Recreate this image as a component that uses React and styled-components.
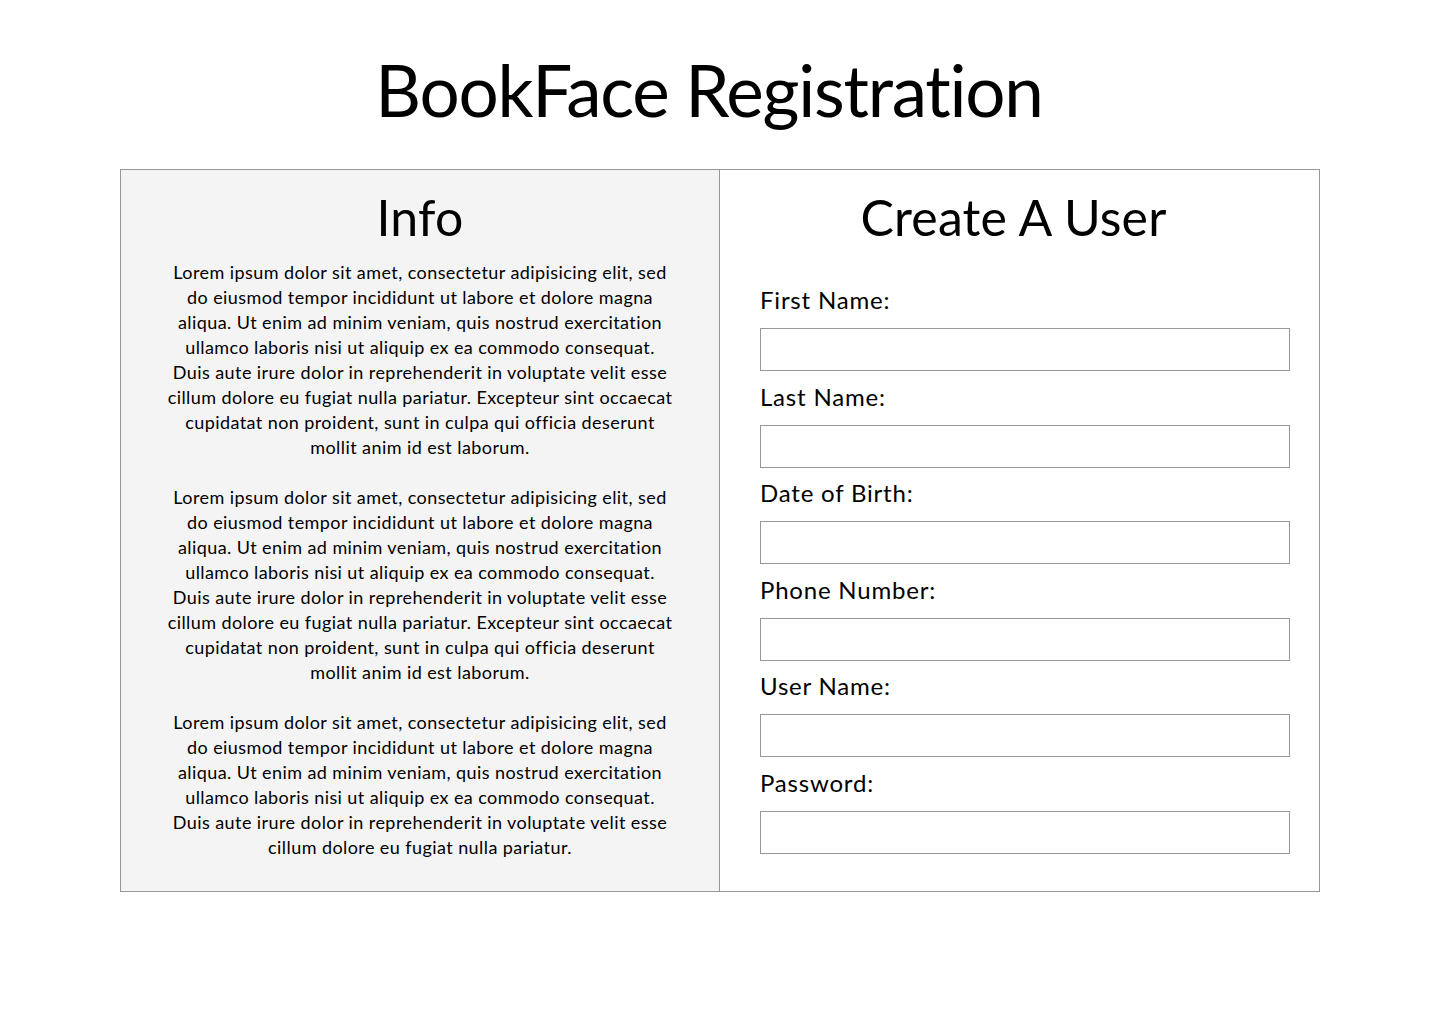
import React from "react";
import styled, { createGlobalStyle } from "styled-components";

const GlobalStyle = createGlobalStyle`
  html, body {
    margin: 0;
    padding: 0;
    background: #ffffff;
    font-family: "Lato", "Noto Sans", sans-serif;
    color: #000;
  }
`;

const Page = styled.div`
  width: 1440px;
  min-height: 1024px;
  display: flex;
  flex-direction: column;
  align-items: center;
`;

const Title = styled.h1`
  margin: 48px 0 0;
  padding-right: 22px;
  font-size: 71px;
  font-weight: 400;
  letter-spacing: -1.25px;
  line-height: 84px;
  text-align: center;
`;

const Card = styled.div`
  margin-top: 37px;
  width: 1200px;
  display: grid;
  grid-template-columns: 1fr 1fr;
  border: 1px solid #979797;
  box-sizing: border-box;
`;

const InfoPanel = styled.section`
  background: #f4f4f4;
  border-right: 1px solid #979797;
  padding: 15px 20px 30px;
  display: flex;
  flex-direction: column;
  align-items: center;
`;

const FormPanel = styled.section`
  padding: 15px 29px 37px 40px;
  display: flex;
  flex-direction: column;
`;

const PanelTitle = styled.h2`
  margin: 0;
  padding-right: ${(props) => props.$shift || 0}px;
  font-size: 50px;
  font-weight: 400;
  letter-spacing: 0.2px;
  line-height: 64px;
  text-align: center;
`;

const Paragraph = styled.p`
  margin: ${(props) => (props.$first ? "11px" : "25px")} 0 0;
  font-size: 18px;
  letter-spacing: 0.42px;
  line-height: 25px;
  text-align: center;
`;

const Line = styled.span`
  display: block;
  white-space: nowrap;
`;

const Form = styled.form`
  margin-top: 36px;
  display: flex;
  flex-direction: column;
`;

const Label = styled.label`
  font-size: 24px;
  letter-spacing: 0.8px;
  line-height: 30px;
  margin-top: ${(props) => (props.$first ? "0" : "10.5px")};
`;

const Input = styled.input`
  margin-top: 13px;
  width: 530px;
  height: 43px;
  box-sizing: border-box;
  border: 1px solid #979797;
  border-radius: 0;
  background: #fff;
  font: inherit;
  font-size: 18px;
  padding: 0 10px;
  outline: none;
`;

const fullText = [
  "Lorem ipsum dolor sit amet, consectetur adipisicing elit, sed",
  "do eiusmod tempor incididunt ut labore et dolore magna",
  "aliqua. Ut enim ad minim veniam, quis nostrud exercitation",
  "ullamco laboris nisi ut aliquip ex ea commodo consequat.",
  "Duis aute irure dolor in reprehenderit in voluptate velit esse",
  "cillum dolore eu fugiat nulla pariatur. Excepteur sint occaecat",
  "cupidatat non proident, sunt in culpa qui officia deserunt",
  "mollit anim id est laborum.",
];

const shortText = [...fullText.slice(0, 5), "cillum dolore eu fugiat nulla pariatur."];

const paragraphs = [fullText, fullText, shortText];

const fields = [
  { id: "first", label: "First Name:", type: "text" },
  { id: "last", label: "Last Name:", type: "text" },
  { id: "dob", label: "Date of Birth:", type: "text" },
  { id: "phone", label: "Phone Number:", type: "text" },
  { id: "user", label: "User Name:", type: "text" },
  { id: "pass", label: "Password:", type: "password" },
];

export default function App() {
  return (
    <>
      <GlobalStyle />
      <Page>
        <Title>BookFace Registration</Title>
        <Card>
          <InfoPanel>
            <PanelTitle>Info</PanelTitle>
            {paragraphs.map((lines, i) => (
              <Paragraph key={i} $first={i === 0}>
                {lines.map((l, j) => (
                  <Line key={j}>{l}</Line>
                ))}
              </Paragraph>
            ))}
          </InfoPanel>
          <FormPanel>
            <PanelTitle $shift={23}>Create A User</PanelTitle>
            <Form>
              {fields.map((f, i) => (
                <React.Fragment key={f.id}>
                  <Label htmlFor={f.id} $first={i === 0}>
                    {f.label}
                  </Label>
                  <Input id={f.id} type={f.type} />
                </React.Fragment>
              ))}
            </Form>
          </FormPanel>
        </Card>
      </Page>
    </>
  );
}
